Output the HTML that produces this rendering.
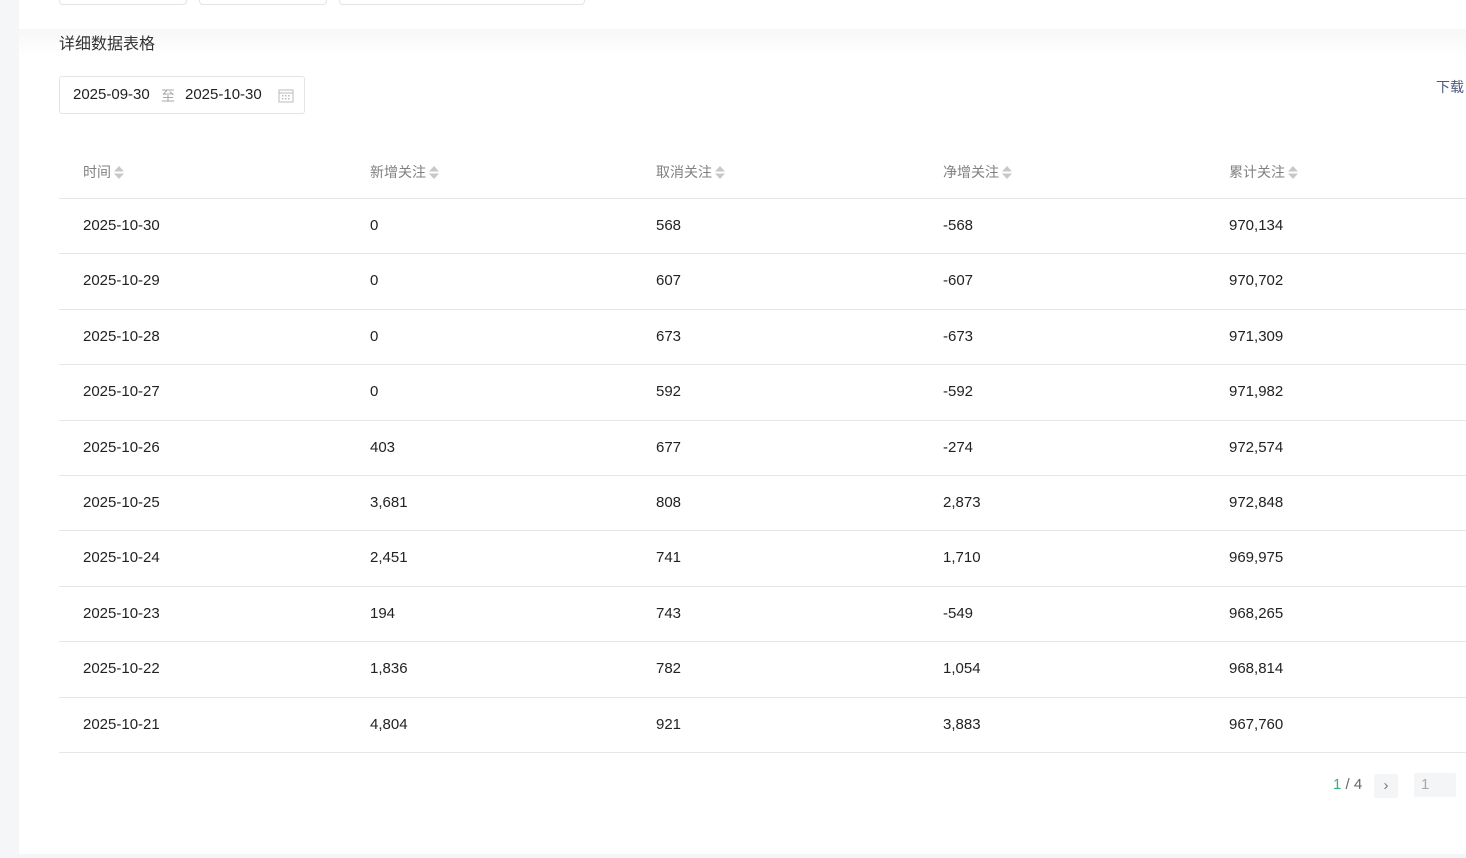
<!DOCTYPE html>
<html><head><meta charset="utf-8"><style>
*{margin:0;padding:0;box-sizing:border-box}
body{width:1466px;height:858px;overflow:hidden;background:#f5f6f8;font-family:"Liberation Sans","Noto Sans CJK SC",sans-serif;position:relative}
.card{position:absolute;left:19px;top:0;width:1447px;height:854px;background:#fff}
.band{position:absolute;left:19px;top:29px;width:1447px;height:28px;background:linear-gradient(#f7f7f7,#fff)}
.btn{position:absolute;top:-10px;height:15px;border:1px solid #e3e4e6;border-radius:4px;background:#fff}
.title{position:absolute;left:59px;top:30px;font-size:16px;color:#333}
.date{position:absolute;left:59px;top:76px;width:246px;height:38px;border:1px solid #e3e4e6;border-radius:3px;font-size:15px;color:#222}
.date span{position:absolute;top:9px}
.dl{position:absolute;left:1436px;top:77px;font-size:14px;color:#4b5a82}
.th{position:absolute;top:162px;font-size:14px;color:#808080}
.sort{display:inline-block;vertical-align:middle;margin-left:3px;width:10px;height:15px;position:relative;top:-1px}
.ln{position:absolute;left:59px;width:1407px;height:1px;background:#e6e6e6}
.c{position:absolute;font-size:15px;color:#222}
</style></head><body>
<div class="card"></div>
<div class="band"></div>
<div class="btn" style="left:59px;width:128px"></div>
<div class="btn" style="left:199px;width:128px"></div>
<div class="btn" style="left:339px;width:246px"></div>
<div class="title">详细数据表格</div>
<div class="date"><span style="left:13px">2025-09-30</span><span style="left:101px;color:#aaa;font-size:14px">至</span><span style="left:125px">2025-10-30</span>
<svg style="position:absolute;left:218px;top:11px" width="16" height="15" viewBox="0 0 16 15"><rect x="1" y="2" width="14" height="12" fill="none" stroke="#bbb"/><line x1="1" y1="5" x2="15" y2="5" stroke="#bbb"/><g fill="#bbb"><rect x="4" y="7" width="1.5" height="1.5"/><rect x="7" y="7" width="1.5" height="1.5"/><rect x="10" y="7" width="1.5" height="1.5"/><rect x="4" y="10" width="1.5" height="1.5"/><rect x="7" y="10" width="1.5" height="1.5"/><rect x="10" y="10" width="1.5" height="1.5"/></g></svg></div>
<div class="dl">下载</div>
<div class="th" style="left:83px">时间<svg class="sort" viewBox="0 0 10 15"><path d="M5 1L10 6.5H0Z M5 14L10 8.5H0Z" fill="#c8c8c8"/></svg></div>
<div class="th" style="left:370px">新增关注<svg class="sort" viewBox="0 0 10 15"><path d="M5 1L10 6.5H0Z M5 14L10 8.5H0Z" fill="#c8c8c8"/></svg></div>
<div class="th" style="left:656px">取消关注<svg class="sort" viewBox="0 0 10 15"><path d="M5 1L10 6.5H0Z M5 14L10 8.5H0Z" fill="#c8c8c8"/></svg></div>
<div class="th" style="left:943px">净增关注<svg class="sort" viewBox="0 0 10 15"><path d="M5 1L10 6.5H0Z M5 14L10 8.5H0Z" fill="#c8c8c8"/></svg></div>
<div class="th" style="left:1229px">累计关注<svg class="sort" viewBox="0 0 10 15"><path d="M5 1L10 6.5H0Z M5 14L10 8.5H0Z" fill="#c8c8c8"/></svg></div>
<div id="rows"></div>
<script>
var d=[["2025-10-30","0","568","-568","970,134"],["2025-10-29","0","607","-607","970,702"],["2025-10-28","0","673","-673","971,309"],["2025-10-27","0","592","-592","971,982"],["2025-10-26","403","677","-274","972,574"],["2025-10-25","3,681","808","2,873","972,848"],["2025-10-24","2,451","741","1,710","969,975"],["2025-10-23","194","743","-549","968,265"],["2025-10-22","1,836","782","1,054","968,814"],["2025-10-21","4,804","921","3,883","967,760"]];
var xs=[83,370,656,943,1229],h='<div class="ln" style="top:198px"></div>';
for(var i=0;i<10;i++){var ty=199+i*55.4;h+='<div class="ln" style="top:'+Math.round(ty+54.4)+'px"></div>';for(var j=0;j<5;j++)h+='<div class="c" style="left:'+xs[j]+'px;top:'+Math.round(ty+18)+'px">'+d[i][j]+'</div>';}
document.getElementById('rows').innerHTML=h;
</script>
<div style="position:absolute;left:1333px;top:776px;font-size:15px;color:#666"><span style="color:#3bb07a">1</span> / 4</div>
<div style="position:absolute;left:1374px;top:774px;width:24px;height:24px;background:#f4f5f7;border-radius:2px;color:#777;font-size:15px;text-align:center;line-height:24px">&#x203A;</div>
<div style="position:absolute;left:1414px;top:773px;width:42px;height:24px;background:#f4f5f7;border-radius:2px;color:#aaa;font-size:15px;padding-left:7px;line-height:24px">1</div>
</body></html>
